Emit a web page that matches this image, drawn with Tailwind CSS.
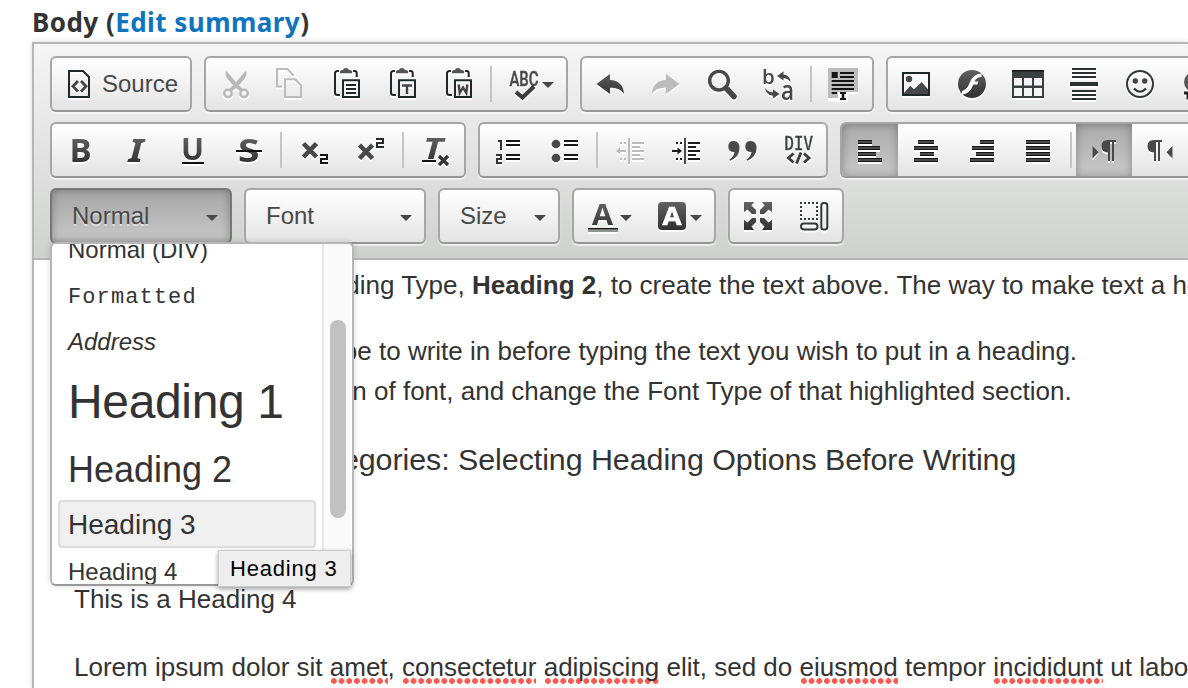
<!DOCTYPE html>
<html lang="en">
<head>
<meta charset="utf-8">
<title>Body editor</title>
<script src="https://cdn.jsdelivr.net/npm/@tailwindcss/browser@4"></script>
</head>
<body class="h-[688px] w-[1188px] overflow-hidden bg-white font-['Liberation_Sans',sans-serif] text-[#333]">
<svg class="absolute size-0"><defs>
<linearGradient id="g" gradientUnits="userSpaceOnUse" x1="0" y1="2" x2="0" y2="30"><stop offset="0" stop-color="#626262"/><stop offset="1" stop-color="#303030"/></linearGradient>
<g id="clip"><path d="M9 3H7.500Q5 3 5 5.500V24.500Q5 27 7.500 27H10M23 3H24.500Q26.700 3 26.700 5V9" fill="none" stroke="#1f2828" stroke-width="2"/><path d="M10 5.300V3.500Q10 2 12 2H13Q13.500 0 16 0T19 2H20Q22 2 22 3.500V5.300Z" fill="#555"/><path d="M13 12.300H29V29H13Z" fill="none" stroke="#1f2828" stroke-width="2"/></g>
</defs></svg>
<div class="flex h-[42px] items-center pl-8 pt-0.5 font-['Noto_Sans',sans-serif] text-[26px] font-bold leading-none tracking-[0.46px]"><span class="whitespace-nowrap">Body (<a class="text-[#0f74bd]">Edit summary</a>)</span></div>

<main class="relative ml-8 h-[646px] w-[1156px] overflow-hidden border-l-2 border-t-2 border-[#b6b6b6] shadow-[0_0_6px_rgba(0,0,0,0.15)]">
<header class="flex h-[216px] flex-col gap-[10px] border-b-2 border-[#b6b6b6] bg-linear-to-b from-[#f5f5f5] to-[#cfd1cf] pl-4 pt-3 [&_svg]:size-8 [&_svg]:shrink-0 [&_svg]:overflow-visible [&_svg]:drop-shadow-[0_2px_0_rgba(255,255,255,0.9)]">

<div class="flex gap-3">
 <section class="flex h-14 w-[142px] shrink-0 items-center gap-1.5 rounded-md border-2 border-[#a6a6a6] border-b-[#979797] bg-linear-to-b from-white to-[#e4e4e4] px-3 shadow-[0_2px_1px_rgba(255,255,255,0.6)]">
  <svg viewBox="0 0 32 32" fill="none"><path d="M5 3H19L25 9V29H5Z" stroke="#1f2828" stroke-width="2"/><path d="M14 13L9 18.300L14 23.600M17 13L22 18.300L17 23.600" stroke="#444" stroke-width="2.800"/></svg>
  <span class="text-2xl leading-none text-[#484848]">Source</span>
 </section>
 <section class="flex h-14 w-[364px] shrink-0 items-center rounded-md border-2 border-[#a6a6a6] border-b-[#979797] bg-linear-to-b from-white to-[#e4e4e4] pl-3 shadow-[0_2px_1px_rgba(255,255,255,0.6)]">
  <div class="flex gap-6">
  <svg viewBox="0 0 32 32" fill="#b8b8b8"><path d="M8 2.500L20 16.500L25 21.500L22.500 23.500L17 19.500L9.500 11Q6.500 7 8 2.500Z"/><path d="M28 2.500L16 16.500L11 21.500L13.500 23.500L19 19.500L26.500 11Q29.500 7 28 2.500Z"/><g fill="none" stroke="#b8b8b8" stroke-width="2.400"><circle cx="10" cy="25.500" r="3.700"/><circle cx="26" cy="25.500" r="3.700"/></g></svg>
  <svg viewBox="0 0 32 32" fill="none" stroke="#bcbcbc" stroke-width="2"><path d="M8 18.500H3V1H13.500L19.500 7.500M11 11.300H21L27 17.300V29H11Z"/></svg>
  <svg viewBox="0 0 32 32"><use href="#clip"/><path d="M16 17H26M16 21H26M16 25H26" stroke="#1f2828" stroke-width="2"/></svg>
  <svg viewBox="0 0 32 32"><use href="#clip"/><path d="M16 17.500H26M21 17.500V26" stroke="#444" stroke-width="2.400"/></svg>
  <svg viewBox="0 0 32 32"><use href="#clip"/><path d="M16.700 16.500L17.700 25L21 19.500L24.300 25L25.300 16.500" fill="none" stroke="#444" stroke-width="2.400"/></svg>
  </div>
  <i class="ml-4 mr-4 h-9 w-0.5 bg-[#c4c4c4]"></i>
  <svg viewBox="0 0 32 32"><text x="1.500" y="18" textLength="29" lengthAdjust="spacingAndGlyphs" font-family="Roboto" font-weight="500" font-size="20" fill="#4a4a4a" stroke="#4a4a4a" stroke-width=".4">ABC</text><path d="M8 24L14.500 29.500L26 18.500" fill="none" stroke="#3c3c3c" stroke-width="4"/></svg>
  <i class="ml-0.5 mt-0.5 h-1.5 w-3 bg-[#474747] [clip-path:polygon(0_0,100%_0,50%_100%)]"></i>
 </section>
 <section class="flex h-14 w-[294px] shrink-0 items-center rounded-md border-2 border-[#a6a6a6] border-b-[#979797] bg-linear-to-b from-white to-[#e4e4e4] pl-3 shadow-[0_2px_1px_rgba(255,255,255,0.6)]">
  <div class="flex gap-6">
  <svg viewBox="0 0 32 32"><path fill="url(#g)" d="M2.500 16L16 6V12C24 12 29.500 17 30 26C27 21 22 19.700 16 19.700V26Z"/></svg>
  <svg viewBox="0 0 32 32"><path fill="#bcbcbc" d="M29.500 16L16 6V12C8 12 2.500 17 2 26C5 21 10 19.700 16 19.700V26Z"/></svg>
  <svg viewBox="0 0 32 32" fill="none" stroke="#484848"><circle cx="13" cy="12.700" r="9.300" stroke-width="3.400"/><path d="M20 20L28 28.500" stroke-width="5.500" stroke-linecap="round"/></svg>
  <svg viewBox="0 0 32 32" fill="#484848"><text x="0" y="15.500" font-family="Open Sans" font-weight="600" font-size="20.500">b</text><text x="19" y="31.500" font-family="Open Sans" font-weight="600" font-size="27" textLength="13" lengthAdjust="spacingAndGlyphs">a</text><path d="M15 8L21.500 3.500V6.500Q28 7 28.500 14Q26 10.500 21.500 10V12.500ZM17.500 26L11 21.500V24.500Q6 24 3 20Q4 27 11 27.700V30.500Z"/></svg>
  </div>
  <i class="ml-4 mr-4 h-9 w-0.5 bg-[#c4c4c4]"></i>
  <svg viewBox="0 0 32 32"><path fill="#bdbdbd" d="M0 0H30V24H20V32H10V30H0Z"/><path fill="#fff" d="M0 30H10V24H20V32H10V31.500H0Z"/><path d="M3.700 4H9.700V10H3.700ZM12 4H26V6H12ZM12 8H26V10H12ZM3.700 12H26V14H3.700ZM3.700 16H26V18H3.700ZM3.700 20H26V22H3.700ZM3.700 24H9V26H3.700ZM12 24H18V26H16.300V30H18V32H12V30H13.700V26H12Z" fill="#151515"/></svg>
 </section>
 <section class="flex h-14 w-[420px] shrink-0 items-center gap-6 rounded-md border-2 border-[#a6a6a6] border-b-[#979797] bg-linear-to-b from-white to-[#e4e4e4] pl-3 shadow-[0_2px_1px_rgba(255,255,255,0.6)]">
  <svg viewBox="0 0 32 32"><path d="M3 5H29V27H3Z" fill="#fafafa" stroke="#1f2828" stroke-width="2"/><circle cx="9" cy="11" r="3.200" fill="#4a4a4a"/><path fill="#484848" d="M4 25L10.300 17.700L14 21.300L21.700 14L28 21.300V26H4Z"/></svg>
  <svg viewBox="0 0 32 32"><circle cx="16" cy="16" r="14" fill="url(#g)"/><path d="M25.500 5.500V9Q20.500 9 18.500 13.500H22.500L21.300 16.500H17.300Q14 26 6 26.500V23Q11 22 13.800 14.500Q17 6 25.500 5.500Z" fill="#fff"/></svg>
  <svg viewBox="0 0 32 32"><path d="M0 2H32V30H0Z" fill="#3a4040"/><path fill="#f4f4f4" d="M2 10H10V17.500H2ZM12 10H20V17.500H12ZM22 10H30V17.500H22ZM2 20H10V28H2ZM12 20H20V28H12ZM22 20H30V28H22Z"/><path d="M0 2H32V3.500H0Z" fill="#151515"/></svg>
  <svg viewBox="0 0 32 32"><path d="M4 0H28V2H4ZM4 4H28V6H4ZM4 8H28V10H4ZM2 14H30V18H2ZM4 22H28V24H4ZM4 26H28V28H4ZM4 30H28V32H4Z" fill="#2a3030"/></svg>
  <svg viewBox="0 0 32 32"><circle cx="16" cy="16" r="13" fill="none" stroke="#333939" stroke-width="2"/><circle cx="11.300" cy="13" r="2.700" fill="#444"/><circle cx="20.700" cy="13" r="2.700" fill="#444"/><path d="M10 20.500Q16 27 22 20.500" fill="none" stroke="#333" stroke-width="2.200"/></svg>
  <svg viewBox="0 0 32 32"><circle cx="14" cy="14" r="10" fill="#555"/><path d="M4 25H8V30H14" fill="none" stroke="#222" stroke-width="3"/></svg>
 </section>
</div>

<div class="flex gap-3">
 <section class="flex h-14 w-[416px] shrink-0 items-center rounded-md border-2 border-[#a6a6a6] border-b-[#979797] bg-linear-to-b from-white to-[#e4e4e4] pl-3 shadow-[0_2px_1px_rgba(255,255,255,0.6)]">
  <div class="flex gap-6 font-['Open_Sans',sans-serif] font-bold">
  <svg viewBox="0 0 32 32" fill="url(#g)"><text x="5.500" y="28" font-size="33">B</text></svg>
  <svg viewBox="0 0 32 32" fill="url(#g)"><text x="8.500" y="28" font-size="33" font-family="Noto Sans" font-style="italic" textLength="15" lengthAdjust="spacingAndGlyphs">I</text></svg>
  <svg viewBox="0 0 32 32" fill="url(#g)"><text x="5" y="25.500" font-size="30" textLength="23" lengthAdjust="spacingAndGlyphs">U</text><path d="M6 28H28V30H6Z" fill="#111"/></svg>
  <svg viewBox="0 0 32 32" fill="url(#g)"><text x="6" y="28" font-size="32" textLength="21.500" lengthAdjust="spacingAndGlyphs">S</text><path d="M4 16H30V18H4Z" fill="#111"/></svg>
  </div>
  <i class="ml-4 mr-4 h-9 w-0.5 bg-[#c4c4c4]"></i>
  <div class="flex gap-6">
  <svg viewBox="0 0 32 32" fill="none"><path d="M5.500 9.500L18.500 23M18.500 9.500L5.500 23" stroke="#484848" stroke-width="4.600"/><path d="M22 21H29V25H23V29H30" stroke="#151515" stroke-width="2"/></svg>
  <svg viewBox="0 0 32 32" fill="none"><path d="M5.500 11L18.500 24.500M18.500 11L5.500 24.500" stroke="#484848" stroke-width="4.600"/><path d="M22 5H29V9H23V13H30" stroke="#252b2b" stroke-width="2"/></svg>
  </div>
  <i class="ml-4 mr-4 h-9 w-0.5 bg-[#c4c4c4]"></i>
  <svg viewBox="0 0 32 32" fill="url(#g)"><text x="3" y="24.500" font-size="28.500" font-family="Open Sans" font-weight="700" font-style="italic" textLength="20" lengthAdjust="spacingAndGlyphs">T</text><path d="M2 26H16V28H2Z" fill="#111"/><path d="M19 22L28 31M28 22L19 31" stroke="#333" stroke-width="3.200"/></svg>
 </section>
 <section class="flex h-14 w-[350px] shrink-0 items-center rounded-md border-2 border-[#a6a6a6] border-b-[#979797] bg-linear-to-b from-white to-[#e4e4e4] pl-3 shadow-[0_2px_1px_rgba(255,255,255,0.6)]">
  <div class="flex gap-6">
  <svg viewBox="0 0 32 32" fill="none" stroke="#151515" stroke-width="2"><path d="M14 7H28M14 11H28M14 21H28M14 25H28"/><path d="M6 7H9V16M4 21H9V25H5V29H10" stroke="#333"/></svg>
  <svg viewBox="0 0 32 32"><path d="M16 7H30M16 11H30M16 21H30M16 25H30" stroke="#151515" stroke-width="2"/><circle cx="8" cy="10" r="4.300" fill="#484848"/><circle cx="8" cy="24" r="4.300" fill="#484848"/></svg>
  </div>
  <i class="ml-4 mr-4 h-9 w-0.5 bg-[#c4c4c4]"></i>
  <div class="flex gap-6">
  <svg viewBox="0 0 32 32" stroke="#bcbcbc" stroke-width="2" fill="none"><path d="M15 4V30M18 9H30M18 13H26M18 17H30M18 21H26M18 25H30M4 17H12M6 9H8M10 9H12M6 25H8M10 25H12"/><path d="M2 17L6 13.500V20.500Z" fill="#bcbcbc" stroke="none"/></svg>
  <svg viewBox="0 0 32 32" stroke="#1c1c1c" stroke-width="2" fill="none"><path d="M18 9H30M18 13H26M18 17H30M18 21H26M18 25H30M2 17H9M6 9H8M10 9H12M6 25H8M10 25H12"/><path d="M15 4V30" stroke="#484848"/><path d="M12 17L7.500 13.500V20.500Z" fill="#1c1c1c" stroke="none"/></svg>
  <svg viewBox="0 0 32 32" fill="#484848"><path d="M7.500 7Q13.500 7 13.500 14Q13.500 23 4 26.700L3.500 25.500Q8 22.500 8.500 18Q2.300 18 2.300 12.500Q2.500 7 7.500 7ZM24.500 7Q30.500 7 30.500 14Q30.500 23 21 26.700L20.500 25.500Q25 22.500 25.500 18Q19.300 18 19.300 12.500Q19.500 7 24.500 7Z"/></svg>
  <svg viewBox="0 0 32 32"><text x="2.500" y="16" font-family="DejaVu Sans Mono" font-size="19" fill="#3c4242" stroke="#3c4242" stroke-width=".5" textLength="28.500" lengthAdjust="spacingAndGlyphs">DIV</text><path d="M11.500 19.500L6.500 24L11.500 28.500M22 19.500L27 24L22 28.500M19 18.500L14.500 29.500" fill="none" stroke="#3c3c3c" stroke-width="2.800"/></svg>
  </div>
 </section>
 <section class="flex h-14 w-[460px] shrink-0 items-center overflow-hidden rounded-md border-2 border-[#a6a6a6] border-b-[#979797] bg-linear-to-b from-white to-[#e4e4e4] shadow-[0_2px_1px_rgba(255,255,255,0.6)]">
  <div class="grid h-full w-14 place-items-center bg-linear-to-b from-[#aaa] to-[#cacaca] shadow-[inset_0_0_10px_rgba(0,0,0,0.3)]"><svg viewBox="0 0 32 32"><path d="M4 6H18V10H4ZM4 12H26V16H4ZM4 18H22V22H4ZM4 24H28V28H4Z" fill="#4a4a4a"/><path d="M4 6.500H18M4 12.500H26M4 18.500H22M4 24.500H28M4 9.500H18M4 15.500H26M4 21.500H22M4 27.500H28" stroke="#151515"/></svg></div>
  <div class="flex gap-6 pl-3">
  <svg viewBox="0 0 32 32"><path d="M8 6H24V10H8ZM4 12H28V16H4ZM10 18H24V22H10ZM4 24H28V28H4Z" fill="#4a4a4a"/><path d="M8 6.500H24M4 12.500H28M10 18.500H24M4 24.500H28M8 9.500H24M4 15.500H28M10 21.500H24M4 27.500H28" stroke="#151515"/></svg>
  <svg viewBox="0 0 32 32"><path d="M14 6H28V10H14ZM6 12H28V16H6ZM10 18H28V22H10ZM4 24H28V28H4Z" fill="#4a4a4a"/><path d="M14 6.500H28M6 12.500H28M10 18.500H28M4 24.500H28M14 9.500H28M6 15.500H28M10 21.500H28M4 27.500H28" stroke="#151515"/></svg>
  <svg viewBox="0 0 32 32"><path d="M4 6H28V10H4ZM4 12H28V16H4ZM4 18H28V22H4ZM4 24H28V28H4Z" fill="#4a4a4a"/><path d="M4 6.500H28M4 12.500H28M4 18.500H28M4 24.500H28M4 9.500H28M4 15.500H28M4 21.500H28M4 27.500H28" stroke="#151515"/></svg>
  </div>
  <i class="ml-4 mr-1 h-9 w-0.5 bg-[#c4c4c4]"></i>
  <div class="grid h-full w-14 place-items-center bg-linear-to-b from-[#aaa] to-[#cacaca] shadow-[inset_0_0_10px_rgba(0,0,0,0.3)]"><svg viewBox="0 0 32 32" fill="#484848"><path d="M4.500 12L10.500 18.200L4.500 24.500Z"/><path d="M20 6H28V8H26V27H24V8H22V27H20V18.500Q13.500 18.500 13.500 12.300Q13.500 6 20 6Z"/></svg></div>
  <div class="pl-3"><svg viewBox="0 0 32 32" fill="#484848"><path d="M28.500 12L22.500 18.200L28.500 24.500Z"/><path d="M10 6H18V8H16V27H14V8H12V27H10V18.500Q3.500 18.500 3.500 12.300Q3.500 6 10 6Z"/></svg></div>
 </section>
</div>

<div class="flex gap-3 text-2xl leading-none text-[#484848]">
 <section class="flex h-14 w-[182px] items-center justify-between rounded-md border-2 border-[#777] bg-linear-to-b from-[#a6a6a6] to-[#c9c9c9] pl-5 pr-3 shadow-[inset_0_0_10px_rgba(0,0,0,0.3)]"><span class="[text-shadow:0_2px_0_rgba(255,255,255,0.5)]">Normal</span><i class="mt-1 h-1.5 w-3 bg-[#474747] [clip-path:polygon(0_0,100%_0,50%_100%)]"></i></section>
 <section class="flex h-14 w-[182px] items-center justify-between rounded-md border-2 border-[#a6a6a6] border-b-[#979797] bg-linear-to-b from-white to-[#e4e4e4] pl-5 pr-3 shadow-[0_2px_1px_rgba(255,255,255,0.6)]"><span>Font</span><i class="mt-1 h-1.5 w-3 bg-[#474747] [clip-path:polygon(0_0,100%_0,50%_100%)]"></i></section>
 <section class="flex h-14 w-[122px] items-center justify-between rounded-md border-2 border-[#a6a6a6] border-b-[#979797] bg-linear-to-b from-white to-[#e4e4e4] pl-5 pr-3 shadow-[0_2px_1px_rgba(255,255,255,0.6)]"><span>Size</span><i class="mt-1 h-1.5 w-3 bg-[#474747] [clip-path:polygon(0_0,100%_0,50%_100%)]"></i></section>
 <section class="flex h-14 w-[144px] items-center rounded-md border-2 border-[#a6a6a6] border-b-[#979797] bg-linear-to-b from-white to-[#e4e4e4] pl-3 shadow-[0_2px_1px_rgba(255,255,255,0.6)]">
  <svg viewBox="0 0 32 32"><text x="6" y="24.500" font-family="Open Sans" font-weight="700" font-size="29" textLength="21" lengthAdjust="spacingAndGlyphs" fill="url(#g)">A</text><path d="M2 28H32V32H2Z" fill="#8f9590"/><path d="M2 28H32V29.300H2Z" fill="#151515"/></svg>
  <i class="ml-0.5 mt-1 h-1.5 w-3 bg-[#474747] [clip-path:polygon(0_0,100%_0,50%_100%)]"></i>
  <svg class="ml-6" viewBox="0 0 32 32"><rect x="2" y="2" width="28" height="28" rx="4" fill="url(#g)"/><text x="6.500" y="25" font-family="Open Sans" font-weight="700" font-size="25" textLength="19" lengthAdjust="spacingAndGlyphs" fill="#fff" stroke="#fff" stroke-width=".6">A</text></svg>
  <i class="ml-0.5 mt-1 h-1.5 w-3 bg-[#474747] [clip-path:polygon(0_0,100%_0,50%_100%)]"></i>
 </section>
 <section class="flex h-14 w-[116px] items-center gap-6 rounded-md border-2 border-[#a6a6a6] border-b-[#979797] bg-linear-to-b from-white to-[#e4e4e4] pl-3 shadow-[0_2px_1px_rgba(255,255,255,0.6)]">
  <svg viewBox="0 0 32 32" fill="url(#g)"><path d="M2 2H12L9.500 5.500L14 10V14H10L5.500 9.500L2 12ZM30 2H20L22.500 5.500L18 10V14H22L26.500 9.500L30 12ZM2 30H12L9.500 26.500L14 22V18H10L5.500 22.500L2 20ZM30 30H20L22.500 26.500L18 22V18H22L26.500 22.500L30 20Z"/></svg>
  <svg viewBox="0 0 32 32" fill="none" stroke="#333939" stroke-width="2"><path d="M2 3H20M2 19H20M3 6V18M19 6V18" stroke-dasharray="2 2"/><rect x="3" y="23.500" width="16.500" height="6" rx="3"/><rect x="23.300" y="3" width="6" height="26.500" rx="2.500"/></svg>
 </section>
</div>
</header>

<article class="flex w-[1154px] flex-col overflow-hidden whitespace-pre pl-10 pt-[5px] text-[26px] leading-[40px]">
<p><span class="inline-block w-[398px] text-right">the Heading Type, </span><b>Heading 2</b>, to create the text above. The way to make text a heading</p>
<p class="mt-[26px]"><span class="inline-block w-[305px] text-right">the type to be </span>to write in before typing the text you wish to put in a heading.</p>
<p><span class="inline-block w-[300px] text-right">a section </span>of font, and change the Font Type of that highlighted section.</p>
<h3 class="mt-7 text-[30.4px] tracking-[-0.05px]"><span class="inline-block w-[384px] text-right">Categories: </span>Selecting Heading Options Before Writing</h3>
<h4 class="mt-[100px]">This is a Heading 4</h4>
<p class="mt-7">Lorem ipsum dolor sit <u class="bg-[radial-gradient(circle,#f65a50_2.5px,transparent_3.2px)] bg-[length:7.7px_6px] bg-[position:0_100%] bg-repeat-x pb-0.5 no-underline">amet</u>, <u class="bg-[radial-gradient(circle,#f65a50_2.5px,transparent_3.2px)] bg-[length:7.7px_6px] bg-[position:0_100%] bg-repeat-x pb-0.5 no-underline">consectetur</u> <u class="bg-[radial-gradient(circle,#f65a50_2.5px,transparent_3.2px)] bg-[length:7.7px_6px] bg-[position:0_100%] bg-repeat-x pb-0.5 no-underline">adipiscing</u> elit, sed do <u class="bg-[radial-gradient(circle,#f65a50_2.5px,transparent_3.2px)] bg-[length:7.7px_6px] bg-[position:0_100%] bg-repeat-x pb-0.5 no-underline">eiusmod</u> tempor <u class="bg-[radial-gradient(circle,#f65a50_2.5px,transparent_3.2px)] bg-[length:7.7px_6px] bg-[position:0_100%] bg-repeat-x pb-0.5 no-underline">incididunt</u> ut labore et</p>
</article>

<div class="absolute left-4 top-[198px] flex h-[344px] w-[304px] overflow-hidden rounded-md border-2 border-[#b6b6b6] border-b-[#999] bg-white shadow-[0_0_6px_rgba(0,0,0,0.15)]">
 <ul class="-mt-4 flex w-[270px] shrink-0 flex-col whitespace-nowrap pl-1.5 pr-1.5 [&>li]:flex [&>li]:shrink-0 [&>li]:items-center [&>li]:border-2 [&>li]:border-transparent [&>li]:pl-2 [&>li]:leading-none">
  <li class="h-[44px] text-2xl">Normal (DIV)</li>
  <li class="h-[50px] font-['Liberation_Mono',monospace] text-[22px] tracking-[1.1px]"><span class="pt-0.5">Formatted</span></li>
  <li class="h-[42px] pb-0.5 text-2xl italic">Address</li>
  <li class="h-[76px] text-5xl tracking-[-0.35px]">Heading 1</li>
  <li class="h-[60px] text-4xl">Heading 2</li>
  <li class="h-12 rounded border-[#ddd]! bg-[#f0f0f0] pt-0.5 text-[28px]">Heading 3</li>
  <li class="h-[46px] pt-0.5 text-2xl">Heading 4</li>
 </ul>
 <div class="w-7 shrink-0 border-l-2 border-[#e8e8e8] bg-[#fafafa] pl-1.5 pt-[76px]"><div class="h-[198px] w-4 rounded-full bg-[#c1c1c1]"></div></div>
</div>
<div class="absolute left-[184px] top-[506px] flex h-[37px] w-[133px] items-center border border-[#ccc] bg-[#eee] pl-[11px] text-[22px] leading-none tracking-[0.8px] text-black shadow-[0_2px_5px_rgba(0,0,0,0.35)]">Heading 3</div>
</main>
</body>
</html>
